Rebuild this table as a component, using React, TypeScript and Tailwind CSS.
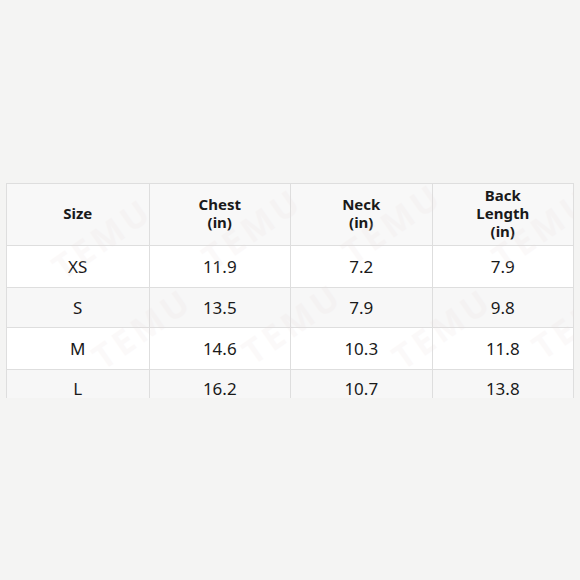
const headers = [['Size'], ['Chest', '(in)'], ['Neck', '(in)'], ['Back', 'Length', '(in)']];

const rows = [
  { size: 'XS', chest: '11.9', neck: '7.2', back: '7.9', h: 'h-[42px]', bg: 'bg-white' },
  { size: 'S', chest: '13.5', neck: '7.9', back: '9.8', h: 'h-[40px]', bg: 'bg-[#f7f7f7]' },
  { size: 'M', chest: '14.6', neck: '10.3', back: '11.8', h: 'h-[42px]', bg: 'bg-white' },
  { size: 'L', chest: '16.2', neck: '10.7', back: '13.8', h: 'h-[39px]', bg: 'bg-[#f7f7f7]' },
];

// faint diagonal watermark over the chart
const marks = [
  [40, 30], [190, 20], [330, 15], [480, 20],
  [80, 120], [230, 115], [380, 120], [520, 110],
];

export default function App() {
  return (
    <div
      className="w-[580px] h-[580px] bg-[#f4f4f3] pt-[183px] px-[6px] text-[#1a1a1a]"
      style={{ fontFamily: '"Noto Sans", "Open Sans", sans-serif' }}
    >
      {/* size chart, cropped at the bottom like the source photo */}
      <div className="relative h-[215px] overflow-hidden">
        <div className="border border-[#dedede]">
          <div className="grid grid-cols-4 h-[62px] bg-[#f8f8f8] border-b border-[#dedede]">
            {headers.map((lines, i) => (
              <div
                key={i}
                className={`flex flex-col items-center justify-center pb-[3px] text-[15px] font-bold leading-[18px] ${i > 0 ? 'border-l border-[#dedede]' : ''}`}
              >
                {lines.map(l => <span key={l}>{l}</span>)}
              </div>
            ))}
          </div>
          {rows.map(r => (
            <div key={r.size} className={`grid grid-cols-4 ${r.h} ${r.bg} border-b border-[#dedede]`}>
              {[r.size, r.chest, r.neck, r.back].map((v, i) => (
                <div
                  key={i}
                  className={`flex items-center justify-center text-[17px] ${i > 0 ? 'border-l border-[#dedede]' : ''}`}
                >
                  {v}
                </div>
              ))}
            </div>
          ))}
        </div>
        {marks.map(([x, y], i) => (
          <span
            key={i}
            aria-hidden
            className="pointer-events-none absolute text-[34px] font-bold tracking-[4px] text-[#e9dcdc] opacity-15 -rotate-[35deg]"
            style={{ left: x, top: y }}
          >
            TEMU
          </span>
        ))}
      </div>
    </div>
  );
}
